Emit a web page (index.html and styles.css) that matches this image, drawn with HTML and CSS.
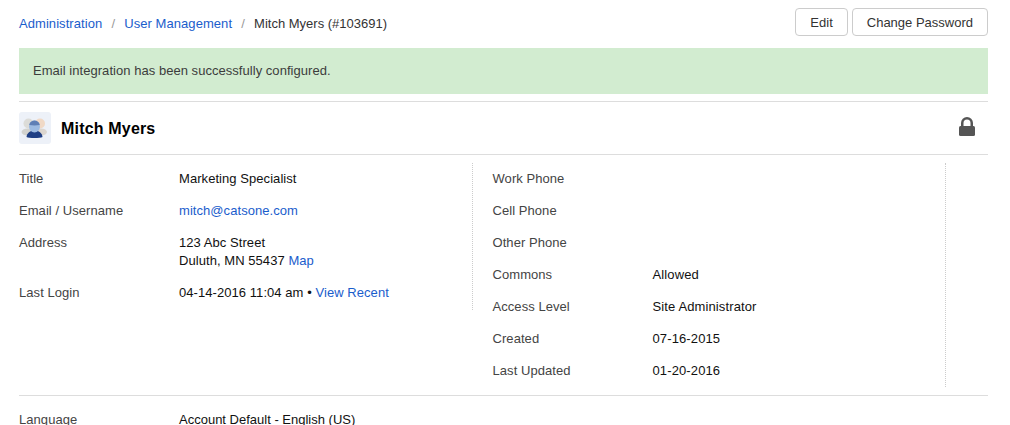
FILE: index.html
```html
<!DOCTYPE html>
<html lang="en">
<head>
  <meta charset="UTF-8" />
  <title>Mitch Myers</title>
  <link rel="stylesheet" href="styles.css">
</head>
<body>

<div class="page">
  <div class="top-bar">
    <div class="crumbs">
      <a href="#">Administration</a>
      <span class="sep">/</span>
      <a href="#">User Management</a>
      <span class="sep">/</span>
      <span class="current">Mitch Myers (#103691)</span>
    </div>
    <div class="actions">
      <button class="btn">Edit</button>
      <button class="btn">Change Password</button>
    </div>
  </div>

  <div class="alert">Email integration has been successfully configured.</div>

  <div class="user-head">
    <div class="avatar">
      <svg width="32" height="32" viewBox="0 0 32 32">
        <circle cx="9.500" cy="11.500" r="5" fill="#dcdcd8"/>
        <circle cx="21" cy="11.500" r="5" fill="#f0d9c6"/>
        <ellipse cx="8.500" cy="20" rx="6" ry="3.500" fill="#d3d3cf"/>
        <ellipse cx="22" cy="20" rx="6" ry="3.500" fill="#dcd6cf"/>
        <path d="M7.500 25c.5-4 3.500-6.500 8-6.500s7.500 2.500 8 6.500c-2 1.300-14 1.300-16 0z" fill="#1f3f85"/>
        <ellipse cx="15.500" cy="14.500" rx="5.500" ry="6" fill="#9dbbe2"/>
        <path d="M10.200 13c.5-3 2.800-4.500 5.300-4.500s4.800 1.500 5.300 4.500c-3.500.6-7 .6-10.600 0z" fill="#5f7fb5"/>
      </svg>
    </div>
    <h1 class="user-name">Mitch Myers</h1>
    <svg class="lock" width="16" height="19" viewBox="0 0 16 19">
      <path d="M2 10V6a6 6 0 0 1 12 0v4h-2.500V6a3.500 3.500 0 0 0-7 0v4z" fill="#555"/>
      <rect x="0" y="9" width="16" height="10" rx="1.500" fill="#555"/>
    </svg>
  </div>

  <div class="details">
    <div class="col col-left">
      <div class="row"><span class="label">Title</span><span class="value">Marketing Specialist</span></div>
      <div class="row"><span class="label">Email / Username</span><span class="value"><a href="#">mitch@catsone.com</a></span></div>
      <div class="row"><span class="label">Address</span><span class="value">123 Abc Street<br>Duluth, MN 55437 <a href="#">Map</a></span></div>
      <div class="row"><span class="label">Last Login</span><span class="value">04-14-2016 11:04 am • <a href="#">View Recent</a></span></div>
    </div>
    <div class="col col-right">
      <div class="row"><span class="label">Work Phone</span><span class="value"></span></div>
      <div class="row"><span class="label">Cell Phone</span><span class="value"></span></div>
      <div class="row"><span class="label">Other Phone</span><span class="value"></span></div>
      <div class="row"><span class="label">Commons</span><span class="value">Allowed</span></div>
      <div class="row"><span class="label">Access Level</span><span class="value">Site Administrator</span></div>
      <div class="row"><span class="label">Created</span><span class="value">07-16-2015</span></div>
      <div class="row"><span class="label">Last Updated</span><span class="value">01-20-2016</span></div>
    </div>
  </div>

  <div class="extra">
    <div class="row"><span class="label">Language</span><span class="value">Account Default - English (US)</span></div>
  </div>
</div>

</body>
</html>
```

FILE: styles.css
```css
html, body {
  height: 100%;
  overflow: hidden;
}

body {
  margin: 0;
  background: #fff;
  font-family: "Liberation Sans", Arial, sans-serif;
  font-size: 13px;
  line-height: 18px;
  letter-spacing: 0.06px;
  color: #111;
}

a {
  color: #1a5dcc;
  text-decoration: none;
}

.page {
  width: 969px;
  margin-left: 19px;
}

.top-bar {
  display: flex;
  justify-content: space-between;
  align-items: center;
  height: 28px;
  padding-top: 8px;
  margin-bottom: 12px;
}

.crumbs {
  padding-top: 4px;
  color: #333;
}

.current {
  letter-spacing: 0;
}

.sep {
  color: #999;
  margin: 0 5.5px;
}

.actions {
  display: flex;
  gap: 4px;
}

.btn {
  height: 28px;
  padding: 0 14px;
  background: #fff;
  border: 1px solid #ccc;
  border-radius: 4px;
  font-family: inherit;
  font-size: 13px;
  color: #333;
}

.alert {
  height: 46px;
  line-height: 46px;
  padding-left: 14px;
  background: #d2ecd0;
  color: #3c3c3c;
  letter-spacing: 0.04px;
  margin-bottom: 7px;
}

.user-head {
  display: flex;
  align-items: center;
  height: 52px;
  border-top: 1px solid #ddd;
  border-bottom: 1px solid #ddd;
}

.avatar {
  width: 32px;
  height: 32px;
  background: #edf1f8;
  border-radius: 3px;
  margin-right: 10px;
}

.user-name {
  margin: 0;
  padding-top: 2px;
  font-size: 16px;
  font-weight: bold;
  letter-spacing: 0.18px;
  color: #000;
  flex: 1;
}

.lock {
  margin-right: 13px;
  margin-bottom: 3px;
}

.details {
  display: flex;
  padding-top: 8px;
  padding-bottom: 8px;
  border-bottom: 1px solid #ddd;
  height: 224px;
  align-items: flex-start;
}

.col {
  border-right: 1px dotted #ccc;
  padding-top: 7px;
}

.col-left {
  width: 453px;
  height: 140px;
}

.col-right {
  width: 452.5px;
  height: 217px;
  padding-left: 19.5px;
}

.col-right .value {
  letter-spacing: 0.12px;
}

.row {
  display: flex;
  margin-bottom: 14px;
}

.label {
  width: 160px;
  flex-shrink: 0;
  color: #444;
}

.extra {
  padding-top: 15px;
}

.extra .value {
  letter-spacing: 0;
}
```
